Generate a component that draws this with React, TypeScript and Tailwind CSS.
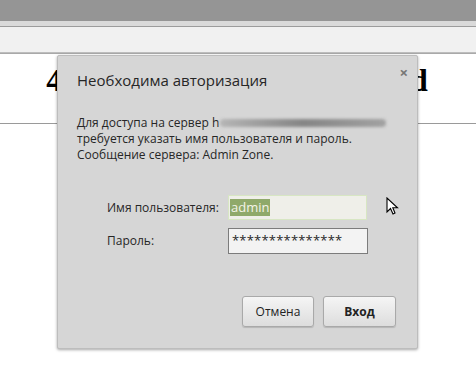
import { useState } from 'react';

export default function App() {
  const [user] = useState('admin');

  return (
    <div className="relative w-[476px] h-[388px] overflow-hidden bg-white">
      {/* Browser chrome */}
      <div className="h-[21px] bg-[#959595]" />
      <div className="h-[5px] bg-[#dadada]" />
      <div className="h-px bg-[#9c9c9c]" />
      <div className="h-[25px] bg-[#f1f1f1]" />
      <div className="h-px bg-[#bdbdbd]" />
      <div className="h-px bg-[#a9a9a9]" />

      {/* Page behind the dialog */}
      <div className="pt-[8px]">
        <h1
          className="text-center text-[32px] font-bold leading-[37px] text-black whitespace-nowrap pr-[2px]"
          style={{ fontFamily: '"Liberation Serif", serif' }}
        >
          401 Authorization Required
        </h1>
        <hr className="mt-[24px] border-t border-[#9a9a9a]" />
      </div>

      {/* Auth dialog */}
      <div
        className="absolute left-[57px] top-[55px] w-[361px] h-[294px] bg-[#d6d6d6] border border-[#bdbdbd] rounded-[2px] shadow-[0_1px_3px_rgba(0,0,0,0.35)] text-[#262626] flex flex-col"
        style={{ fontFamily: '"Open Sans", sans-serif' }}
      >
        <button className="absolute right-[9px] top-[9px] text-[#777] text-[15px] font-bold leading-none">
          ×
        </button>

        <div className="pl-[19px] pt-[14px] text-[15px] leading-[20px]">Необходима авторизация</div>

        <div className="pl-[19px] pt-[25px] text-[12px] leading-[16px]">
          <div className="flex items-center">
            <span>Для доступа на сервер h</span>
            <span className="ml-[1px] h-[8px] w-[166px] rounded-full bg-gradient-to-r from-[#b5b5b5] via-[#858585] to-[#a2a2a2] blur-[1.5px]" />
          </div>
          <div>требуется указать имя пользователя и пароль.</div>
          <div>Сообщение сервера: Admin Zone.</div>
        </div>

        <div className="pl-[49px] pt-[32px] flex flex-col gap-[8px] text-[12px]">
          <div className="flex items-center">
            <span className="w-[121px]">Имя пользователя:</span>
            <div className="w-[139px] h-[25px] border border-[#d7e6c3] bg-[#efefe9] flex items-center pl-[1px]">
              <span className="bg-[#8fa96a] text-[#f4f4e8] text-[13px] leading-[17px] px-[1px]">{user}</span>
            </div>
          </div>
          <div className="flex items-center">
            <span className="w-[121px]">Пароль:</span>
            <div className="w-[140px] h-[26px] border border-[#7c7c7c] bg-[#f3f3f3] flex items-center pl-[3px] text-[13px] tracking-[0.2px]">
              ***************
            </div>
          </div>
        </div>

        <div className="mt-auto mb-[21px] flex justify-end gap-[9px] pr-[21px] text-[12px]">
          <button className="w-[72px] h-[31px] rounded-[3px] border border-[#a9a9a9] bg-gradient-to-b from-[#f5f5f5] to-[#dddddd] shadow-[0_1px_1px_rgba(0,0,0,0.15)] text-[#222]">
            Отмена
          </button>
          <button className="w-[73px] h-[31px] rounded-[3px] border border-[#a9a9a9] bg-gradient-to-b from-[#f5f5f5] to-[#dddddd] shadow-[0_1px_1px_rgba(0,0,0,0.15)] font-bold text-[#222]">
            Вход
          </button>
        </div>
      </div>

      {/* Mouse pointer */}
      <svg className="absolute left-[386px] top-[197px]" width="14" height="20" viewBox="0 0 14 20">
        <path d="M1 1 L1 15 L4.5 11.5 L7 17 L9 16 L6.8 10.8 L11.5 10.8 Z" fill="#fff" stroke="#000" strokeWidth="1.1" strokeLinejoin="miter" />
      </svg>
    </div>
  );
}
